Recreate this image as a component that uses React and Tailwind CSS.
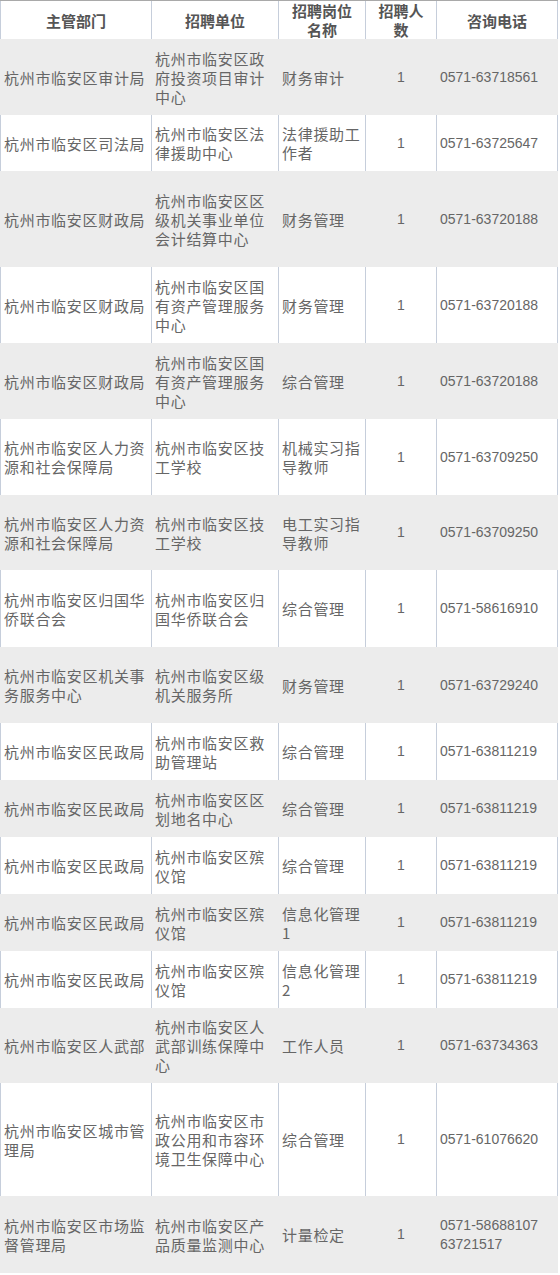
const rows = [
  ["杭州市临安区审计局", "杭州市临安区政府投资项目审计中心", "财务审计", "0571-63718561", "h-[76px]"],
  ["杭州市临安区司法局", "杭州市临安区法律援助中心", "法律援助工作者", "0571-63725647", "h-[56px]"],
  ["杭州市临安区财政局", "杭州市临安区区级机关事业单位会计结算中心", "财务管理", "0571-63720188", "h-[96px]"],
  ["杭州市临安区财政局", "杭州市临安区国有资产管理服务中心", "财务管理", "0571-63720188", "h-[76px]"],
  ["杭州市临安区财政局", "杭州市临安区国有资产管理服务中心", "综合管理", "0571-63720188", "h-[76px]"],
  ["杭州市临安区人力资源和社会保障局", "杭州市临安区技工学校", "机械实习指导教师", "0571-63709250", "h-[76px]"],
  ["杭州市临安区人力资源和社会保障局", "杭州市临安区技工学校", "电工实习指导教师", "0571-63709250", "h-[75px]"],
  ["杭州市临安区归国华侨联合会", "杭州市临安区归国华侨联合会", "综合管理", "0571-58616910", "h-[77px]"],
  ["杭州市临安区机关事务服务中心", "杭州市临安区级机关服务所", "财务管理", "0571-63729240", "h-[76px]"],
  ["杭州市临安区民政局", "杭州市临安区救助管理站", "综合管理", "0571-63811219", "h-[57px]"],
  ["杭州市临安区民政局", "杭州市临安区区划地名中心", "综合管理", "0571-63811219", "h-[57px]"],
  ["杭州市临安区民政局", "杭州市临安区殡仪馆", "综合管理", "0571-63811219", "h-[57px]"],
  ["杭州市临安区民政局", "杭州市临安区殡仪馆", "信息化管理1", "0571-63811219", "h-[57px]"],
  ["杭州市临安区民政局", "杭州市临安区殡仪馆", "信息化管理2", "0571-63811219", "h-[57px]"],
  ["杭州市临安区人武部", "杭州市临安区人武部训练保障中心", "工作人员", "0571-63734363", "h-[75px]"],
  ["杭州市临安区城市管理局", "杭州市临安区市政公用和市容环境卫生保障中心", "综合管理", "0571-61076620", "h-[113px]"],
  ["杭州市临安区市场监督管理局", "杭州市临安区产品质量监测中心", "计量检定", "0571-58688107\n63721517", "h-[77px]"],
];

const cols = "grid grid-cols-[151px_127px_87px_71px_122px]";

export default function App() {
  return (
    <div className="bg-white min-h-[1275px] font-['Noto_Sans_CJK_SC',sans-serif]">
      <div className="w-[558px]">
        {/* header */}
        <div className={`${cols} h-[39px] bg-white border-t border-[#a9a9a9] text-[15px] font-bold text-[#555] leading-[19px] overflow-hidden`}>
          <div className="border-l border-[#c6cedb] flex items-center justify-center">主管部门</div>
          <div className="border-l border-[#c6cedb] flex items-center justify-center">招聘单位</div>
          <div className="border-l border-[#c6cedb] flex items-start justify-center text-center">招聘岗位<br />名称</div>
          <div className="border-l border-[#c6cedb] flex items-start justify-center text-center">招聘人<br />数</div>
          <div className="border-l border-r border-[#c6cedb] flex items-center justify-center">咨询电话</div>
        </div>

        {rows.map((r, i) => {
          const gray = i % 2 === 0;
          const b = gray ? "border-transparent" : "border-[#c6cedb]";
          return (
            <div key={i} className={`${cols} ${r[4]} ${gray ? "bg-[#ececec]" : "bg-white"} text-[15px] leading-[19px] text-[#666] tracking-[0.7px]`}>
              <div className={`border-l ${b} flex items-center pl-[3px]`}>{r[0]}</div>
              <div className={`border-l ${b} flex items-center pl-[3px]`}>{r[1]}</div>
              <div className={`border-l ${b} flex items-center pl-[3px]`}>{r[2]}</div>
              <div className={`border-l ${b} flex items-center justify-center font-['Liberation_Sans',sans-serif] text-[14px] tracking-normal`}>1</div>
              <div className={`border-l border-r ${b} flex items-center pl-[3px] font-['Liberation_Sans',sans-serif] text-[14px] tracking-normal whitespace-pre-line`}>{r[3]}</div>
            </div>
          );
        })}
      </div>
    </div>
  );
}
